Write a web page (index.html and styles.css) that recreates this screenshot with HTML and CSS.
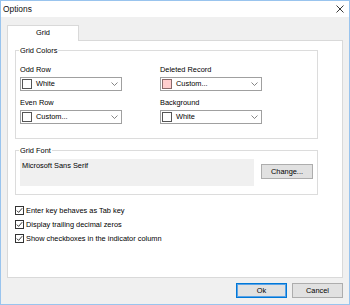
FILE: index.html
```html
<!DOCTYPE html>
<html>
<head>
<meta charset="utf-8">
<title>Options</title>
<link rel="stylesheet" href="styles.css">
</head>
<body>
<div class="window">
  <div class="titlebar">
    <span class="title">Options</span>
    <svg class="close" width="8" height="8" viewBox="0 0 8 8"><path d="M0.5 0.5L7.5 7.5M7.5 0.5L0.5 7.5" stroke="#222" stroke-width="0.9" fill="none"/></svg>
  </div>
  <div class="content">
    <div class="tabs"><div class="tab">Grid</div></div>
    <div class="panel">
      <fieldset class="group group-colors">
        <legend>Grid Colors</legend>
        <div class="color-grid">
          <div class="field">
            <div class="label">Odd Row</div>
            <div class="combo"><span class="swatch"></span><span class="combo-text">White</span><svg class="chev" width="7" height="4" viewBox="0 0 7 4"><path d="M0.5 0.5L3.5 3.5L6.5 0.5" stroke="#666" stroke-width="0.8" fill="none"/></svg></div>
          </div>
          <div class="field">
            <div class="label">Deleted Record</div>
            <div class="combo"><span class="swatch swatch-pink"></span><span class="combo-text">Custom...</span><svg class="chev" width="7" height="4" viewBox="0 0 7 4"><path d="M0.5 0.5L3.5 3.5L6.5 0.5" stroke="#666" stroke-width="0.8" fill="none"/></svg></div>
          </div>
          <div class="field">
            <div class="label">Even Row</div>
            <div class="combo"><span class="swatch"></span><span class="combo-text">Custom...</span><svg class="chev" width="7" height="4" viewBox="0 0 7 4"><path d="M0.5 0.5L3.5 3.5L6.5 0.5" stroke="#666" stroke-width="0.8" fill="none"/></svg></div>
          </div>
          <div class="field">
            <div class="label">Background</div>
            <div class="combo"><span class="swatch"></span><span class="combo-text">White</span><svg class="chev" width="7" height="4" viewBox="0 0 7 4"><path d="M0.5 0.5L3.5 3.5L6.5 0.5" stroke="#666" stroke-width="0.8" fill="none"/></svg></div>
          </div>
        </div>
      </fieldset>
      <fieldset class="group group-font">
        <legend>Grid Font</legend>
        <div class="font-row">
          <div class="font-box">Microsoft Sans Serif</div>
          <button class="btn btn-change">Change...</button>
        </div>
      </fieldset>
      <div class="checks">
        <div class="check"><span class="box"><svg width="7" height="7" viewBox="0 0 7 7"><path d="M0.8 3.6L2.6 5.4L6.2 1.2" stroke="#222" stroke-width="0.9" fill="none"/></svg></span><span>Enter key behaves as Tab key</span></div>
        <div class="check"><span class="box"><svg width="7" height="7" viewBox="0 0 7 7"><path d="M0.8 3.6L2.6 5.4L6.2 1.2" stroke="#222" stroke-width="0.9" fill="none"/></svg></span><span>Display trailing decimal zeros</span></div>
        <div class="check"><span class="box"><svg width="7" height="7" viewBox="0 0 7 7"><path d="M0.8 3.6L2.6 5.4L6.2 1.2" stroke="#222" stroke-width="0.9" fill="none"/></svg></span><span>Show checkboxes in the indicator column</span></div>
      </div>
    </div>
    <div class="buttons">
      <button class="btn btn-default">Ok</button>
      <button class="btn">Cancel</button>
    </div>
  </div>
</div>
</body>
</html>
```
FILE: styles.css
```css
html, body {
  margin: 0;
  padding: 0;
}
body {
  font-family: "Liberation Sans", Arial, sans-serif;
  font-size: 7.4px;
  color: #000;
}
.window {
  width: 350px;
  height: 305px;
  box-sizing: border-box;
  border: 1px solid #99c4ee;
  background: #f0f0f0;
  display: flex;
  flex-direction: column;
}
.titlebar {
  height: 16px;
  flex: none;
  background: #fff;
  display: flex;
  align-items: center;
  justify-content: space-between;
  padding: 0 5px 0 2px;
}
.title {
  font-size: 8.4px;
  line-height: 16px;
  color: #111;
}
.close {
  display: block;
}
.content {
  flex: 1;
  display: flex;
  flex-direction: column;
  padding: 8px 6px 6px;
  min-height: 0;
}
.tabs {
  display: flex;
  flex: none;
}
.tab {
  width: 72px;
  height: 16px;
  box-sizing: border-box;
  border: 1px solid #d9d9d9;
  border-bottom: none;
  background: #fff;
  text-align: center;
  line-height: 14px;
  margin-bottom: -1px;
  position: relative;
  z-index: 1;
}
.panel {
  flex: 1;
  box-sizing: border-box;
  border: 1px solid #d9d9d9;
  background: #fff;
  padding: 4px 0 0 7px;
  min-height: 0;
}
.group {
  margin: 0;
  width: 303px;
  box-sizing: border-box;
  border: 1px solid #dcdcdc;
  padding: 0 4px 0 4px;
  min-width: 0;
}
.group legend {
  padding: 0 1px;
  margin-left: -1px;
  line-height: 11px;
  height: 11px;
}
.group-colors {
  padding-top: 9px;
  padding-bottom: 14px;
}
.group-font {
  margin-top: 6px;
  padding-top: 3px;
  padding-bottom: 8px;
}
.color-grid {
  display: grid;
  grid-template-columns: 102px 102px;
  column-gap: 38px;
  row-gap: 7px;
}
.label {
  line-height: 10px;
  height: 10px;
  margin-bottom: 2px;
  white-space: nowrap;
}
.combo {
  height: 14px;
  box-sizing: border-box;
  border: 1px solid #a0a0a0;
  background: #fff;
  display: flex;
  align-items: center;
  padding: 0 3px 0 1px;
}
.swatch {
  width: 10px;
  height: 10px;
  box-sizing: border-box;
  border: 1px solid #555;
  background: #fff;
  margin-right: 4px;
  flex: none;
}
.swatch-pink {
  background: #ffcece;
  border-color: #8a6a6a;
}
.combo-text {
  flex: 1;
  line-height: 12px;
}
.chev {
  display: block;
  flex: none;
}
.font-row {
  display: flex;
  align-items: flex-start;
  gap: 7px;
}
.font-box {
  width: 234px;
  height: 27px;
  box-sizing: border-box;
  background: #f0f0f0;
  padding: 2px 2px;
  line-height: 10px;
}
.btn {
  font-family: inherit;
  font-size: 7.4px;
  color: #000;
  height: 15px;
  box-sizing: border-box;
  border: 1px solid #adadad;
  background: #e1e1e1;
  padding: 0;
  margin: 0;
  line-height: 13px;
  width: 51px;
}
.btn-change {
  width: 52px;
  margin-top: 5px;
}
.btn-default {
  border-color: #0078d7;
  box-shadow: inset 0 0 0 1px #5aa2e6;
}
.checks {
  margin-top: 8px;
}
.check {
  display: flex;
  align-items: center;
  height: 14px;
  gap: 2px;
  white-space: nowrap;
}
.box {
  width: 9px;
  height: 9px;
  box-sizing: border-box;
  border: 1px solid #333;
  background: #fff;
  display: flex;
  align-items: center;
  justify-content: center;
  flex: none;
}
.box svg {
  display: block;
}
.buttons {
  flex: none;
  display: flex;
  justify-content: flex-end;
  gap: 5px;
  margin-top: 5px;
}
```
